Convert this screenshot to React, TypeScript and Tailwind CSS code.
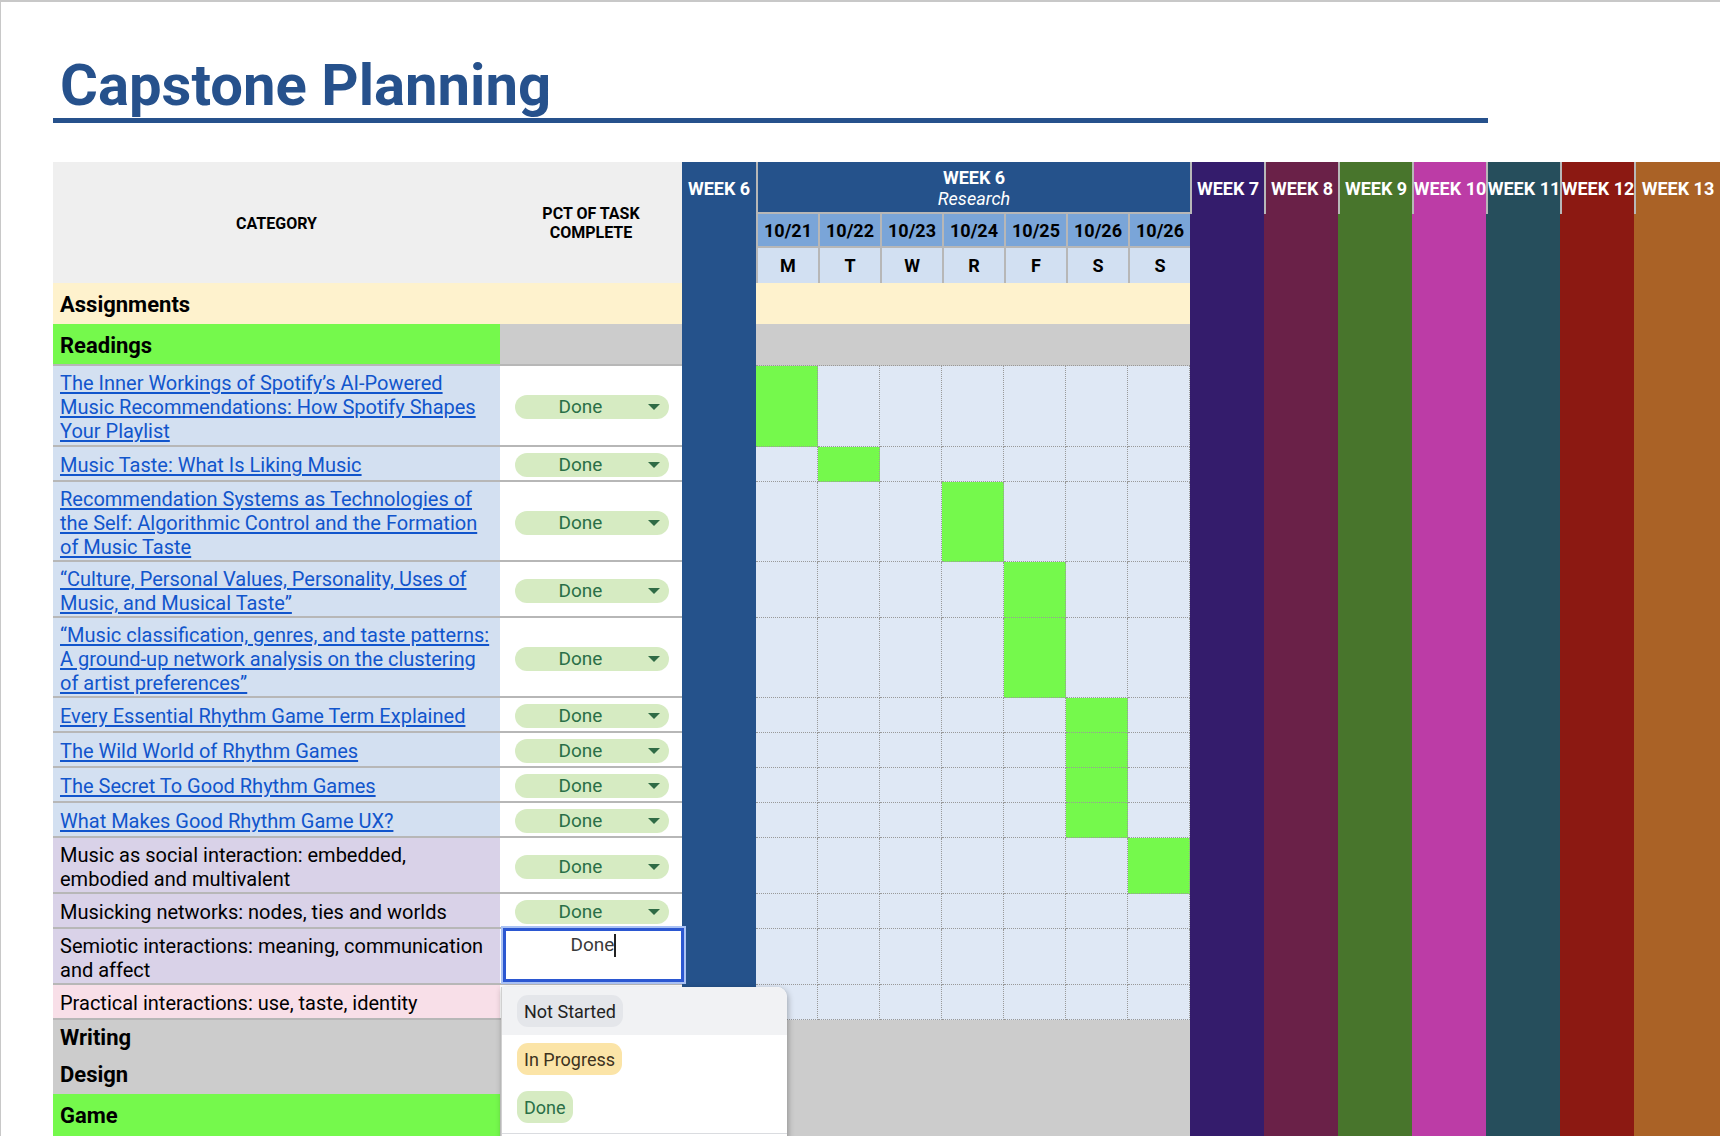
import React from "react";

type Task = {
  lines: string[];
  kind: "link" | "lav" | "pink";
  h: string;
  green: number;
  status: "chip" | "editing" | "none";
};

const tasks: Task[] = [
  {
    lines: [
      "The Inner Workings of Spotify’s AI-Powered",
      "Music Recommendations: How Spotify Shapes",
      "Your Playlist",
    ],
    kind: "link",
    h: "h-[81px]",
    green: 0,
    status: "chip",
  },
  { lines: ["Music Taste: What Is Liking Music"], kind: "link", h: "h-[35px]", green: 1, status: "chip" },
  {
    lines: [
      "Recommendation Systems as Technologies of",
      "the Self: Algorithmic Control and the Formation",
      "of Music Taste",
    ],
    kind: "link",
    h: "h-[80px]",
    green: 3,
    status: "chip",
  },
  {
    lines: ["“Culture, Personal Values, Personality, Uses of", "Music, and Musical Taste”"],
    kind: "link",
    h: "h-[56px]",
    green: 4,
    status: "chip",
  },
  {
    lines: [
      "“Music classification, genres, and taste patterns:",
      "A ground-up network analysis on the clustering",
      "of artist preferences”",
    ],
    kind: "link",
    h: "h-[80px]",
    green: 4,
    status: "chip",
  },
  { lines: ["Every Essential Rhythm Game Term Explained"], kind: "link", h: "h-[35px]", green: 5, status: "chip" },
  { lines: ["The Wild World of Rhythm Games"], kind: "link", h: "h-[35px]", green: 5, status: "chip" },
  { lines: ["The Secret To Good Rhythm Games"], kind: "link", h: "h-[35px]", green: 5, status: "chip" },
  { lines: ["What Makes Good Rhythm Game UX?"], kind: "link", h: "h-[35px]", green: 5, status: "chip" },
  {
    lines: ["Music as social interaction: embedded,", "embodied and multivalent"],
    kind: "lav",
    h: "h-[56px]",
    green: 6,
    status: "chip",
  },
  { lines: ["Musicking networks: nodes, ties and worlds"], kind: "lav", h: "h-[35px]", green: -1, status: "chip" },
  {
    lines: ["Semiotic interactions: meaning, communication", "and affect"],
    kind: "lav",
    h: "h-[56px]",
    green: -1,
    status: "editing",
  },
  { lines: ["Practical interactions: use, taste, identity"], kind: "pink", h: "h-[35px]", green: -1, status: "none" },
];

const dates = ["10/21", "10/22", "10/23", "10/24", "10/25", "10/26", "10/26"];
const days = ["M", "T", "W", "R", "F", "S", "S"];

const weeks = [
  { label: "WEEK 7", bg: "bg-[#341c6c]", w: "w-[74px]", lw: "w-[74px]" },
  { label: "WEEK 8", bg: "bg-[#6a2148]", w: "w-[74px]", lw: "w-[74px]" },
  { label: "WEEK 9", bg: "bg-[#48752c]", w: "w-[74px]", lw: "w-[74px]" },
  { label: "WEEK 10", bg: "bg-[#bc3ca6]", w: "w-[74px]", lw: "w-[74px]" },
  { label: "WEEK 11", bg: "bg-[#264e5c]", w: "w-[74px]", lw: "w-[74px]" },
  { label: "WEEK 12", bg: "bg-[#8c1912]", w: "w-[74px]", lw: "w-[74px]" },
  { label: "WEEK 13", bg: "bg-[#aa6226]", w: "w-[100px]", lw: "w-[86px]" },
];

function DoneChip() {
  return (
    <div className="ml-[15px] mt-[3px] w-[154px] h-[24px] rounded-full bg-[#d6ebc2] flex items-center">
      <div className="w-[131px] text-center text-[19px] leading-[24px] text-[#2a6f47]">Done</div>
      <svg width="12" height="6" viewBox="0 0 12 6" className="ml-[2px]">
        <path d="M0 0H12L6 6Z" fill="#2f6b45" />
      </svg>
    </div>
  );
}

function TaskRow({ t }: { t: Task }) {
  const catBg =
    t.kind === "link" ? "bg-[#d3e0f1]" : t.kind === "lav" ? "bg-[#d9d2e8]" : "bg-[#f8dfe8]";
  return (
    <div className={`flex ${t.h}`}>
      <div
        className={`w-[447px] shrink-0 flex flex-col justify-center pl-[7px] pt-[3px] border-b-2 border-[#b7b7b7] text-[20px] leading-[24px] ${catBg}`}
      >
        {t.lines.map((l, i) => (
          <div key={i} className="whitespace-nowrap">
            {t.kind === "link" ? (
              <a className="text-[#1155cc] underline decoration-[#1155cc] underline-offset-[2px]">{l}</a>
            ) : (
              <span className="text-black">{l}</span>
            )}
          </div>
        ))}
      </div>
      <div className="w-[182px] shrink-0 bg-white border-b-2 border-[#b7b7b7] flex items-center relative">
        {t.status === "chip" && <DoneChip />}
        {t.status === "editing" && (
          <div className="absolute left-[1px] -top-[3px] -right-[4px] -bottom-[1px] border-2 border-[#aac2f4] z-10">
            <div className="w-full h-full bg-white border-[3px] border-[#2b57d1] flex justify-center">
              <div className="flex items-start text-[19px] leading-[24px] text-[#3a3a3a] pt-[2px]">
                <span>Done</span>
                <span className="w-[2px] h-[23px] bg-[#222] mt-[1px]" />
              </div>
            </div>
          </div>
        )}
      </div>
      <div className="w-[74px] shrink-0 bg-[#25528b]" />
      {days.map((_, i) => (
        <div
          key={i}
          className={`w-[62px] shrink-0 border-r border-b border-dotted border-[#999999] ${
            i === t.green ? "bg-[#75f94c]" : "bg-[#dfe8f5]"
          }`}
        />
      ))}
    </div>
  );
}

function Chip({ text, cls }: { text: string; cls: string }) {
  return (
    <span className={`inline-flex items-center h-[32px] px-[7px] rounded-[11px] text-[18px] ${cls}`}>{text}</span>
  );
}

function App() {
  return (
    <div className="w-[1720px] h-[1136px] overflow-hidden bg-white border-t-2 border-l border-[#c8c8c8] font-['Roboto',sans-serif]">
      <div className="ml-[52px] mt-[54px]">
        <h1 className="pl-[7px] text-[58px] leading-[58px] font-bold text-[#26518c]">Capstone Planning</h1>
        <div className="mt-[4px] h-[5px] w-[1435px] bg-[#26518c]" />
      </div>

      <div className="relative flex ml-[52px] mt-[39px]">
        <div className="flex flex-col w-[1137px] shrink-0">
          {/* header */}
          <div className="flex h-[121px]">
            <div className="w-[447px] shrink-0 bg-[#efefef] flex items-center justify-center font-bold text-[16px] text-black pt-[2px]">
              CATEGORY
            </div>
            <div className="w-[182px] shrink-0 bg-[#efefef] flex items-center justify-center text-center font-bold text-[16px] leading-[19px] text-black">
              PCT OF TASK
              <br />
              COMPLETE
            </div>
            <div className="w-[74px] shrink-0 bg-[#25528b]">
              <div className="h-[52px] flex items-center justify-center text-white font-bold text-[18px] whitespace-nowrap">
                WEEK 6
              </div>
            </div>
            <div className="w-[434px] shrink-0 flex flex-col">
              <div className="h-[52px] bg-[#25528b] border-l-2 border-b-2 border-[#b7b7b7] flex flex-col items-center justify-center text-white text-[18px] leading-[21px] pt-[1px]">
                <span className="font-bold">WEEK 6</span>
                <span className="italic">Research</span>
              </div>
              <div className="flex h-[34px]">
                {dates.map((d, i) => (
                  <div
                    key={i}
                    className="w-[62px] shrink-0 bg-[#7aa5d8] border-l-2 border-b-2 border-[#b7b7b7] flex items-center justify-center font-bold text-[18px] text-black"
                  >
                    {d}
                  </div>
                ))}
              </div>
              <div className="flex h-[35px]">
                {days.map((d, i) => (
                  <div
                    key={i}
                    className="w-[62px] shrink-0 bg-[#d2e0f2] border-l-2 border-[#b7b7b7] flex items-center justify-center font-bold text-[18px] text-black"
                  >
                    {d}
                  </div>
                ))}
              </div>
            </div>
          </div>

          {/* Assignments */}
          <div className="flex h-[41px]">
            <div className="w-[629px] shrink-0 bg-[#fef2cd] flex items-center pl-[7px] pt-[2px] font-bold text-[22px] text-black">
              Assignments
            </div>
            <div className="w-[74px] shrink-0 bg-[#25528b]" />
            <div className="w-[434px] shrink-0 bg-[#fef2cd]" />
          </div>

          {/* Readings */}
          <div className="flex h-[42px]">
            <div className="w-[447px] shrink-0 bg-[#75f94c] flex items-center pl-[7px] pt-[3px] font-bold text-[22px] text-black border-b-2 border-[#b7b7b7]">
              Readings
            </div>
            <div className="w-[182px] shrink-0 bg-[#cccccc] border-b-2 border-[#b7b7b7]" />
            <div className="w-[74px] shrink-0 bg-[#25528b]" />
            <div className="w-[434px] shrink-0 bg-[#cccccc] border-b border-dotted border-[#999999]" />
          </div>

          {tasks.map((t, i) => (
            <TaskRow key={i} t={t} />
          ))}

          {/* Writing / Design / Game */}
          <div className="flex h-[35px] bg-[#cccccc]">
            <div className="w-[447px] shrink-0 flex items-center pl-[7px] font-bold text-[22px] text-black">
              Writing
            </div>
          </div>
          <div className="flex h-[39px] bg-[#cccccc]">
            <div className="w-[447px] shrink-0 flex items-center pl-[7px] font-bold text-[22px] text-black">
              Design
            </div>
          </div>
          <div className="flex h-[42px] bg-[#cccccc]">
            <div className="w-[447px] shrink-0 bg-[#75f94c] flex items-center pl-[7px] font-bold text-[22px] text-black">
              Game
            </div>
          </div>
          <div className="h-[60px] bg-[#cccccc]" />
        </div>

        {weeks.map((w) => (
          <div key={w.label} className={`${w.w} shrink-0 ${w.bg}`}>
            <div
              className={`${w.lw} h-[52px] border-l-2 border-[#b8b8b8] flex items-center justify-center text-white font-bold text-[18px] whitespace-nowrap`}
            >
              {w.label}
            </div>
          </div>
        ))}

        {/* status dropdown */}
        <div className="absolute left-[448px] top-[825px] w-[286px] h-[160px] bg-white rounded-tr-[10px] border-l border-[#d0d0d0] shadow-[1px_2px_6px_rgba(0,0,0,0.3)] z-20 overflow-hidden">
          <div className="h-[48px] bg-[#f1f2f4] flex items-center pl-[15px]">
            <Chip text="Not Started" cls="bg-[#e4e6ea] text-[#222]" />
          </div>
          <div className="h-[48px] flex items-center pl-[15px]">
            <Chip text="In Progress" cls="bg-[#fbe4a7] text-[#3d3220]" />
          </div>
          <div className="h-[48px] flex items-center pl-[15px]">
            <Chip text="Done" cls="bg-[#d6ebc2] text-[#2a6f47]" />
          </div>
          <div className="mt-[2px] border-t border-[#dadce0]" />
        </div>
      </div>
    </div>
  );
}

export default App;
